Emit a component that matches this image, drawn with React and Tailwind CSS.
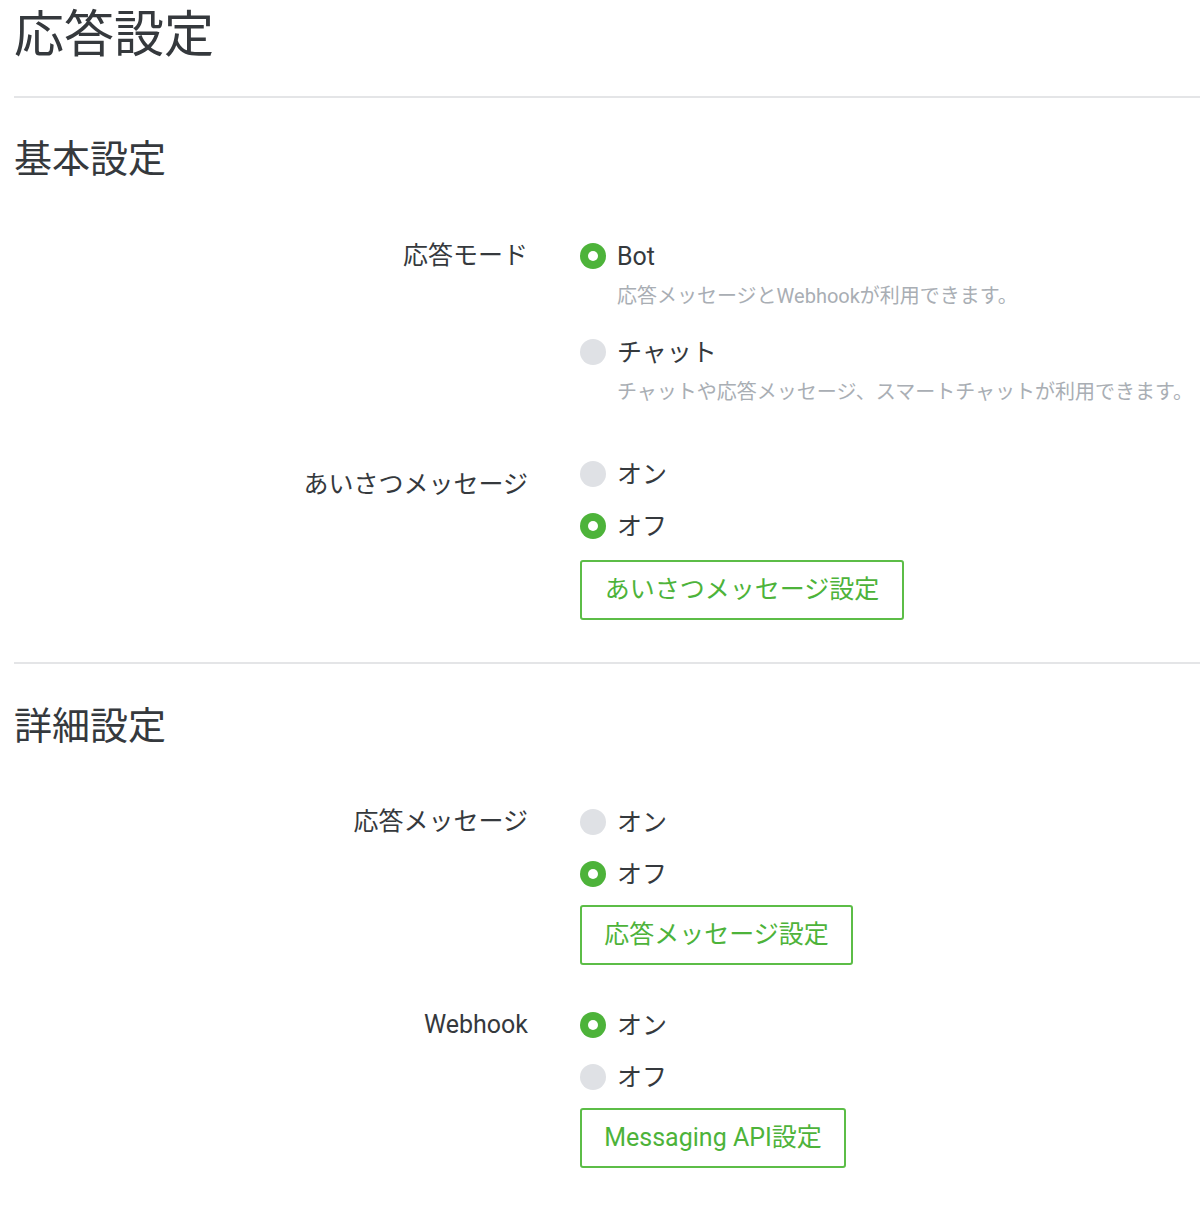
import React from "react";

const font = { fontFamily: 'Roboto, "Noto Sans CJK JP", sans-serif' };

function Radio({ checked, label }) {
  return (
    <div className="flex items-center h-[52px]">
      {checked ? (
        <span className="w-[26px] h-[26px] rounded-full bg-[#4db33a] flex items-center justify-center">
          <span className="w-[10px] h-[10px] rounded-full bg-white" />
        </span>
      ) : (
        <span className="w-[26px] h-[26px] rounded-full bg-[#dfe1e5]" />
      )}
      <span className="ml-[11px] text-[25px] text-[#35393d] leading-none">{label}</span>
    </div>
  );
}

function Desc({ children }) {
  return (
    <div className="pl-[37px] h-[28px] flex items-center text-[20px] text-[#a9aeb4] whitespace-nowrap">
      {children}
    </div>
  );
}

function GreenButton({ children, className }) {
  return (
    <button
      className={
        "h-[60px] px-[20px] border-2 border-[#5cbd47] rounded-[3px] text-[25px] text-[#4db33a] bg-white whitespace-nowrap " +
        className
      }
    >
      {children}
    </button>
  );
}

function Row({ label, labelOffset = "mt-0", children, className }) {
  return (
    <div className={"flex " + className}>
      <div className={"w-[514px] shrink-0 text-right h-[52px] flex items-center justify-end text-[25px] text-[#35393d] " + labelOffset}>
        {label}
      </div>
      <div className="ml-[52px]">{children}</div>
    </div>
  );
}

export default function App() {
  return (
    <div className="bg-white min-h-[1223px] pl-[14px]" style={font}>
      <h1 className="text-[50px] text-[#35393d] leading-none pt-[10px] h-[96px]">応答設定</h1>
      <div className="border-t-2 border-[#e4e5e7]" />

      <h2 className="text-[38px] text-[#35393d] leading-none mt-[42px] h-[41px]">基本設定</h2>

      <Row label="応答モード" className="mt-[49px]">
        <Radio checked label="Bot" />
        <Desc>応答メッセージとWebhookが利用できます。</Desc>
        <div className="mt-[16px]">
          <Radio label="チャット" />
        </div>
        <Desc>チャットや応答メッセージ、スマートチャットが利用できます。</Desc>
      </Row>

      <Row label="あいさつメッセージ" labelOffset="mt-[11px]" className="mt-[42px]">
        <Radio label="オン" />
        <Radio checked label="オフ" />
        <GreenButton className="mt-[8px] w-[324px]">あいさつメッセージ設定</GreenButton>
      </Row>

      <div className="border-t-2 border-[#e4e5e7] mt-[42px]" />

      <h2 className="text-[38px] text-[#35393d] leading-none mt-[43px] h-[41px]">詳細設定</h2>

      <Row label="応答メッセージ" className="mt-[48px]">
        <Radio label="オン" />
        <Radio checked label="オフ" />
        <GreenButton className="mt-[5px] w-[273px]">応答メッセージ設定</GreenButton>
      </Row>

      <Row label="Webhook" className="mt-[34px]">
        <Radio checked label="オン" />
        <Radio label="オフ" />
        <GreenButton className="mt-[5px] w-[266px]">Messaging API設定</GreenButton>
      </Row>
    </div>
  );
}
